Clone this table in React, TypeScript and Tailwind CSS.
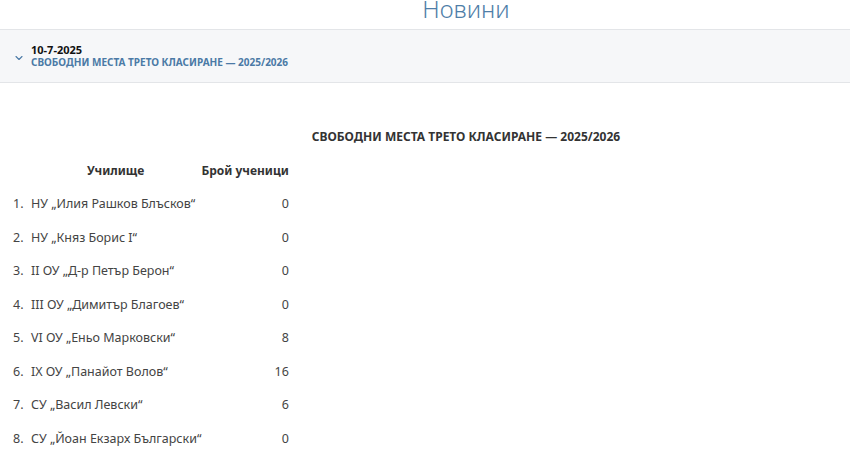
import { ChevronDown } from "lucide-react";

const rows = [
  { name: "НУ „Илия Рашков Блъсков“", count: 0 },
  { name: "НУ „Княз Борис I“", count: 0 },
  { name: "II ОУ „Д-р Петър Берон“", count: 0 },
  { name: "III ОУ „Димитър Благоев“", count: 0 },
  { name: "VI ОУ „Еньо Марковски“", count: 8 },
  { name: "IX ОУ „Панайот Волов“", count: 16 },
  { name: "СУ „Васил Левски“", count: 6 },
  { name: "СУ „Йоан Екзарх Български“", count: 0 },
  { name: "СУ „Св. Климент Охридски“", count: 0 },
];

export default function App() {
  return (
    <div
      lang="bg"
      className="h-[462px] w-[850px] overflow-hidden bg-white"
      style={{ fontFamily: '"Noto Sans", "Open Sans", sans-serif' }}
    >
      <div className="h-[29px] overflow-hidden pl-[82px] text-center">
        <h1 className="-mt-[7px] text-[24px] font-light leading-[32px] text-[#4f7ea8]">Новини</h1>
      </div>

      <div className="flex h-[54px] items-center gap-[6px] border-y border-[#e3e5e8] bg-[#f6f7f9] pl-[13px]">
        <ChevronDown className="mt-[4px] h-[12px] w-[12px] text-[#4a79a6]" strokeWidth={2.2} />
        <div className="flex flex-col">
          <span className="text-[11px] font-bold leading-[12px] text-[#111]">10-7-2025</span>
          <span className="text-[10px] font-bold uppercase leading-[13px] text-[#4b7aa6]">
            Свободни места трето класиране — 2025/2026
          </span>
        </div>
      </div>

      <div className="pt-[45px] pl-[82px] text-center">
        <p className="text-[12px] font-bold leading-[18px] text-[#333]">
          СВОБОДНИ МЕСТА ТРЕТО КЛАСИРАНЕ — 2025/2026
        </p>
      </div>

      <table className="mt-[8px] w-[288px] border-collapse text-[12.5px] text-[#444]">
        <thead>
          <tr className="h-[34px] text-[12px]">
            <th className="pl-[30px] text-center font-bold whitespace-nowrap text-[#333]">Училище</th>
            <th className="text-right font-bold whitespace-nowrap text-[#333]">Брой ученици</th>
          </tr>
        </thead>
        <tbody>
          {rows.map((r, i) => (
            <tr key={i} className="h-[33.5px]">
              <td className="pl-[13px] text-left font-normal whitespace-nowrap">
                <span className="inline-block w-[18px]">{i + 1}.</span>
                {r.name}
              </td>
              <td className="text-right">{r.count}</td>
            </tr>
          ))}
        </tbody>
      </table>
    </div>
  );
}
